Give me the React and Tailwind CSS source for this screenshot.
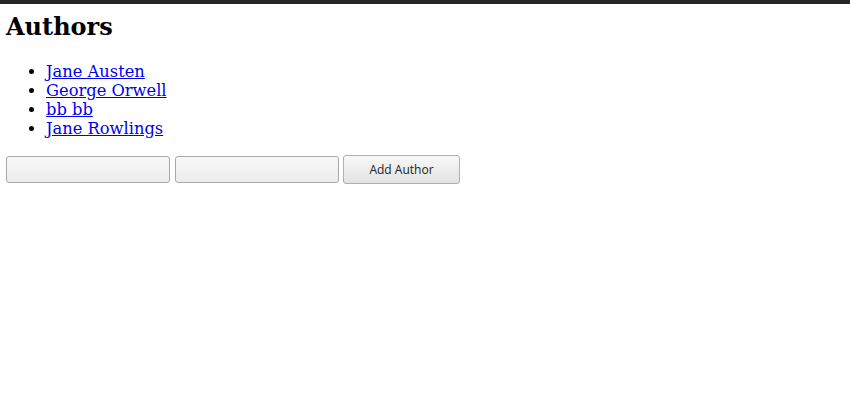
import React from 'react';

const authors = ['Jane Austen', 'George Orwell', 'bb bb', 'Jane Rowlings'];

export default function App() {
  return (
    <div className="min-h-screen bg-white border-t-[4px] border-[#262626] font-['DejaVu_Serif',serif] text-black">
      <div className="px-[6px]">
        <h1 className="text-[24px] leading-[28px] font-bold mt-[9px]">Authors</h1>
        <ul className="list-disc pl-[40px] mt-[21px] text-[16.3px] leading-[19px]">
          {authors.map((a) => (
            <li key={a}>
              <a href="#" className="text-[#0000ee] underline">{a}</a>
            </li>
          ))}
        </ul>
        <div className="flex items-center mt-[17px]">
          <input className="w-[164px] h-[27px] border border-[#a9a9a9] rounded-[3px] bg-gradient-to-b from-[#f8f8f8] to-[#ececec]" />
          <input className="ml-[5px] w-[164px] h-[27px] border border-[#a9a9a9] rounded-[3px] bg-gradient-to-b from-[#f8f8f8] to-[#ececec]" />
          <button className="ml-[4px] w-[117px] h-[29px] border border-[#b0b0b0] rounded-[3px] bg-gradient-to-b from-[#f8f8f8] to-[#e2e2e2] font-['Open_Sans',sans-serif] text-[12px] text-[#222]">
            Add Author
          </button>
        </div>
      </div>
    </div>
  );
}
